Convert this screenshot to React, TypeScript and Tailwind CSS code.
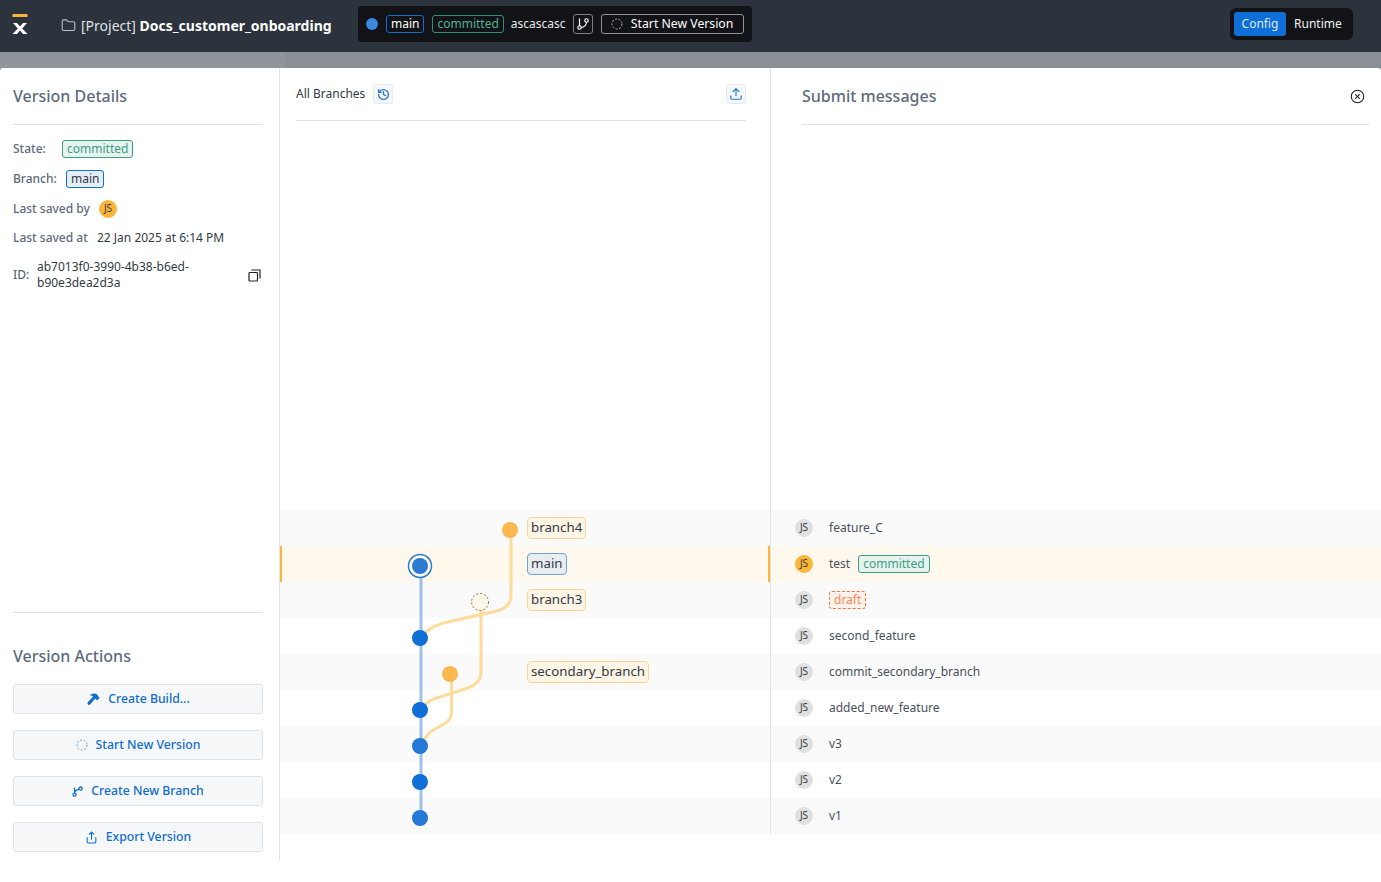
import { Folder, GitBranch, History, Share, Upload, CircleX } from "lucide-react";

const commits = [
  { msg: "feature_C" },
  { msg: "test", state: "committed", active: true },
  { state: "draft" },
  { msg: "second_feature" },
  { msg: "commit_secondary_branch" },
  { msg: "added_new_feature" },
  { msg: "v3" },
  { msg: "v2" },
  { msg: "v1" },
];

const branchLabels: Record<number, string> = {
  0: "branch4",
  1: "main",
  2: "branch3",
  4: "secondary_branch",
};

function DashedCircle({ className }: { className: string }) {
  return (
    <svg width="12" height="12" viewBox="0 0 12 12" className={className}>
      <circle cx="6" cy="6" r="5" fill="none" stroke="currentColor" strokeWidth="1" strokeDasharray="2 1.5" />
    </svg>
  );
}

function Logo() {
  return (
    <svg width="16" height="20" viewBox="0 0 16 20">
      <rect x="0.5" y="0" width="15" height="3" fill="#fbb539" />
      <polygon points="1,9 5,9 8,12.500 11,9 15,9 10.200,14.400 15.500,20 11,20 8,16.400 5,20 0.500,20 5.800,14.400" fill="#ffffff" />
    </svg>
  );
}

function HammerIcon() {
  return (
    <svg width="14" height="14" viewBox="0 0 16 16" fill="currentColor">
      <path d="M4 3.500Q9 0 13 3L15.500 7L12.500 9.500L10.500 7.500L5 14Q3.500 15.500 2 14Q1 12.500 2.500 11.200L8 5.500L6.500 4Z" />
    </svg>
  );
}

function BranchIcon() {
  return (
    <svg width="11" height="11" viewBox="0 0 12 12" fill="none" stroke="currentColor" strokeWidth="1.400">
      <circle cx="2.800" cy="9.400" r="1.700" />
      <circle cx="9.400" cy="2.800" r="1.700" />
      <path d="M2.800 7.600V2M2.800 7Q3.500 4.500 7.600 3.400" />
    </svg>
  );
}

function DuplicateIcon() {
  return (
    <svg width="13" height="13" viewBox="0 0 13 13" fill="none" stroke="#222222" strokeWidth="1.200">
      <rect x="1" y="3.500" width="8.500" height="8.500" rx="0.800" />
      <path d="M3.500 1H12V9.500" />
    </svg>
  );
}

function Avatar({ active }: { active?: boolean }) {
  return (
    <div
      className={`w-[18px] h-[18px] rounded-full flex items-center justify-center text-[10px] text-[#333b45] ${
        active ? "bg-[#fbb539]" : "bg-[#e0e0e0]"
      }`}
    >
      JS
    </div>
  );
}

function ActionButton({ icon, label }: { icon: React.ReactNode; label: string }) {
  return (
    <button className="h-[30px] w-full flex items-center justify-center gap-2 rounded-[3px] border border-[#dfe3e8] bg-[#f6f7f9] text-[12.25px] font-medium text-[#106ecf]">
      {icon}
      {label}
    </button>
  );
}

function CommitGraph() {
  return (
    <svg width="490" height="324" viewBox="280 510 490 324" className="absolute left-0 top-0 pointer-events-none">
      <path d="M421 566V818" stroke="#9dc1ea" strokeWidth="3" fill="none" />
      <path d="M511 530V596Q511 607 497 611L452 621Q432 625 424 634" stroke="#fddc9b" strokeWidth="3" fill="none" />
      <path d="M481 608V672Q481 683 468 688L440 697Q428 700 424 706" stroke="#fddc9b" strokeWidth="3" fill="none" />
      <path d="M451.500 674V712Q451.500 720 444 724L432 731Q426 735 423 742" stroke="#fddc9b" strokeWidth="3" fill="none" />
      <circle cx="510" cy="530" r="8" fill="#fab84f" />
      <circle cx="420" cy="566" r="11.500" fill="#fff8ec" stroke="#2a7bd0" strokeWidth="1.500" />
      <circle cx="420" cy="566" r="8" fill="#2a7bd0" />
      <circle cx="480" cy="602" r="8.500" fill="#fdf7ec" stroke="#9a6b2f" strokeWidth="1" strokeDasharray="2 2" />
      <circle cx="420" cy="638" r="8" fill="#0f6fd6" />
      <circle cx="450" cy="674" r="8" fill="#fab84f" />
      <circle cx="420" cy="710" r="8" fill="#0f6fd6" />
      <circle cx="420" cy="746" r="8" fill="#2379d5" />
      <circle cx="420" cy="782" r="8" fill="#0f6fd6" />
      <circle cx="420" cy="818" r="8" fill="#2379d5" />
    </svg>
  );
}

export default function App() {
  return (
    <div className="w-[1381px] h-[882px] overflow-hidden flex flex-col bg-[#8b8f96] font-['Noto_Sans',sans-serif] text-xs text-[#333b45]">
      {/* Top bar */}
      <header className="h-[52px] shrink-0 bg-[#2c333d] flex items-center text-white">
        <div className="w-[61px] pl-[12px] flex items-center -mt-1">
          <Logo />
        </div>
        <div className="w-[297px] flex items-center gap-[5px] text-sm">
          <Folder size={15} strokeWidth={1.75} className="text-[#b9bdc4] -mt-0.5" />
          <span className="text-[#dfe2e6]">
            [Project] <span className="font-bold text-white">Docs_customer_onboarding</span>
          </span>
        </div>
        <div className="h-9 w-[394px] rounded-[4px] bg-[#111317] flex items-center pl-2 -mt-1">
          <div className="w-3 h-3 rounded-full bg-[#3b87dd]" />
          <span className="ml-2 h-[18px] px-[4px] flex items-center rounded-[3px] border border-[#106ecf] text-xs">main</span>
          <span className="ml-2 h-[18px] px-[4px] flex items-center rounded-[3px] border border-[#2f8f76] text-xs text-[#57ae96]">committed</span>
          <span className="ml-[7px] text-xs text-[#e6e8ea]">ascascasc</span>
          <span className="ml-[7px] w-5 h-5 flex items-center justify-center rounded-[3px] border border-[#7c828b]">
            <GitBranch size={14} />
          </span>
          <span className="ml-2 h-5 w-[143px] flex items-center justify-center gap-2 rounded-[3px] border border-[#8d939b] text-[12.25px]">
            <DashedCircle className="text-[#aeb3ba]" />
            Start New Version
          </span>
        </div>
        <div className="ml-auto mr-[28px] h-8 w-[123px] rounded-[6px] bg-[#111317] flex items-center pl-1 gap-2 -mt-1">
          <span className="h-6 w-[52px] flex items-center justify-center rounded-[3px] bg-[#0f6fd6] text-[#dceafa]">Config</span>
          <span className="text-[#f0f1f2]">Runtime</span>
        </div>
      </header>

      {/* Backdrop strip */}
      <div className="h-4 shrink-0 flex">
        <div className="w-[285px] bg-[#90949b]" />
        <div className="flex-1 bg-[#8b8f96]" />
      </div>

      <main className="flex-1 flex items-start bg-white rounded-t-[3px]">
        {/* Version details */}
        <aside className="w-[280px] h-[792px] shrink-0 border-r border-[#e2e4e8] flex flex-col pl-[13px] pr-[16px]">
          <h2 className="h-[57px] shrink-0 flex items-center text-base font-medium text-[#5f6b7c] border-b border-[#dfe1e5]">Version Details</h2>
          <div className="mt-[14px] h-5 flex items-center text-[#5f6b7c]">
            <span className="w-[49px] font-medium">State:</span>
            <span className="h-[18px] px-[4px] flex items-center rounded-[3px] border border-[#3f9c84] bg-[#e6f3ef] text-[#3f9c84]">committed</span>
          </div>
          <div className="mt-[10px] h-5 flex items-center text-[#5f6b7c]">
            <span className="w-[53px] font-medium">Branch:</span>
            <span className="h-[18px] px-[4px] flex items-center rounded-[3px] border border-[#106ecf] bg-[#e5edf7] text-[#333b45]">main</span>
          </div>
          <div className="mt-[10px] h-5 flex items-center text-[#5f6b7c]">
            <span className="w-[86px] font-medium">Last saved by</span>
            <Avatar active />
          </div>
          <div className="mt-[9px] h-5 flex items-center">
            <span className="w-[84px] font-medium text-[#5f6b7c]">Last saved at</span>
            22 Jan 2025 at 6:14 PM
          </div>
          <div className="mt-[11px] flex items-center leading-[16px]">
            <span className="w-6 font-medium text-[#5f6b7c]">ID:</span>
            <span className="w-[176px]">ab7013f0-3990-4b38-b6ed-b90e3dea2d3a</span>
            <span className="ml-auto mr-[2px]">
              <DuplicateIcon />
            </span>
          </div>
          <div className="flex-1" />
          <div className="border-t border-[#dfe1e5] h-[72px] shrink-0 flex items-end pb-4">
            <h2 className="text-base font-medium text-[#5f6b7c]">Version Actions</h2>
          </div>
          <div className="flex flex-col gap-4 pb-2">
            <ActionButton icon={<HammerIcon />} label="Create Build..." />
            <ActionButton icon={<DashedCircle className="text-[#6d9fdb]" />} label="Start New Version" />
            <ActionButton icon={<BranchIcon />} label="Create New Branch" />
            <ActionButton icon={<Share size={13} />} label="Export Version" />
          </div>
        </aside>

        {/* Branch graph */}
        <section className="w-[491px] h-[766px] shrink-0 border-r border-[#e2e4e8] flex flex-col">
          <div className="ml-4 mr-6 h-[53px] shrink-0 flex items-center border-b border-[#dfe1e5]">
            <span>All Branches</span>
            <span className="ml-2 w-5 h-5 flex items-center justify-center rounded-[3px] border border-[#e6e9ee] bg-[#f6f7f9] text-[#2a7bd0]">
              <History size={13} strokeWidth={2.5} />
            </span>
            <span className="ml-auto w-5 h-5 flex items-center justify-center rounded-[3px] border border-[#e6e9ee] bg-[#f6f7f9] text-[#2a7bd0]">
              <Upload size={14} strokeWidth={2} />
            </span>
          </div>
          <div className="flex-1" />
          <div className="relative">
            {commits.map((c, i) => (
              <div
                key={i}
                className={`relative h-9 flex items-center pl-[247px] text-[13.3px] ${
                  c.active ? "bg-[#fff8ec]" : i % 2 === 0 ? "bg-[#fafafa]" : "bg-white"
                }`}
              >
                {c.active && <div className="absolute left-0 top-0 w-[2px] h-full bg-[#fbb539]" />}
                {branchLabels[i] && (
                  <span
                    className={`h-[22px] px-[3px] flex items-center rounded-[4px] border ${
                      c.active ? "bg-[#e8eef0] border-[#6ba3dc]" : "bg-[#fdf5e5] border-[#fbd590]"
                    }`}
                  >
                    {branchLabels[i]}
                  </span>
                )}
              </div>
            ))}
            <CommitGraph />
          </div>
        </section>

        {/* Submit messages */}
        <section className="flex-1 h-[766px] flex flex-col">
          <div className="ml-[31px] mr-3 h-[57px] shrink-0 flex items-center justify-between border-b border-[#dfe1e5]">
            <h2 className="text-base font-medium text-[#5f6b7c]">Submit messages</h2>
            <CircleX size={15} strokeWidth={1.75} className="text-[#222222] mr-[4px]" />
          </div>
          <div className="flex-1" />
          <div>
            {commits.map((c, i) => (
              <div
                key={i}
                className={`relative h-9 flex items-center pl-6 ${
                  c.active ? "bg-[#fff8ec]" : i % 2 === 0 ? "bg-[#fafafa]" : "bg-white"
                }`}
              >
                {c.active && <div className="absolute -left-[3px] top-0 w-[2px] h-full bg-[#fbb539]" />}
                <Avatar active={c.active} />
                <span className="ml-[16px] flex items-center gap-2 text-[#4a515b]">
                  {c.msg && <span>{c.msg}</span>}
                  {c.state === "committed" && (
                    <span className="h-[18px] px-[4px] flex items-center rounded-[3px] border border-[#3f9c84] bg-[#e6f3ef] text-[#3f9c84]">committed</span>
                  )}
                  {c.state === "draft" && (
                    <span className="h-[18px] px-[4px] flex items-center rounded-[3px] border border-dashed border-[#f2753f] bg-[#fff2ec] text-[#f78a5a]">draft</span>
                  )}
                </span>
              </div>
            ))}
          </div>
        </section>
      </main>
    </div>
  );
}
